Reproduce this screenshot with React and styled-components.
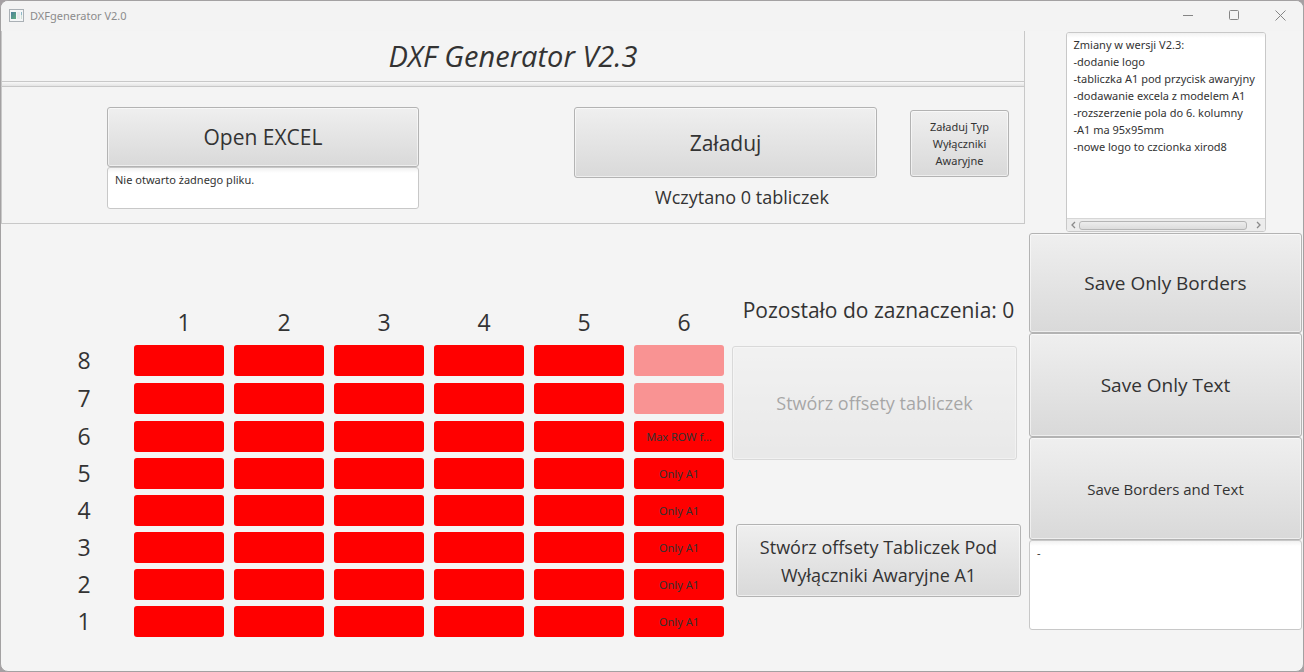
import React from "react";
import styled, { createGlobalStyle, css } from "styled-components";

const Global = createGlobalStyle`
  *, *::before, *::after { box-sizing: border-box; }
  body {
    margin: 0;
    background: #a5a0a3;
    color: #333;
    font-family: "Open Sans", "Noto Sans", sans-serif;
    font-size: 12px;
    line-height: 17px;
  }
  button, textarea { font-family: inherit; color: inherit; margin: 0; }
`;

const smallText = css`
  font-family: "Noto Sans", "Open Sans", sans-serif;
  font-size: 11px;
  line-height: 17px;
`;

const Window = styled.div`
  display: flex;
  flex-direction: column;
  min-height: 100vh;
  border: 1px solid #a3a1a2;
  border-radius: 8px;
  background: #f4f4f4;
  overflow: hidden;
`;

const TitleBar = styled.header`
  display: flex;
  align-items: center;
  height: 30px;
  padding: 0 0 2px 8px;
  gap: 6px;
  background: #f3f3f3;
  color: #8b8b8b;
`;

const WindowName = styled.span`
  flex: 1;
  ${smallText}
`;

const CaptionGroup = styled.div`
  display: flex;
`;

const CaptionButton = styled.button`
  display: flex;
  align-items: center;
  justify-content: center;
  width: 46px;
  height: 28px;
  padding: 0;
  border: 0;
  background: transparent;
  color: #858585;
`;

const Content = styled.div`
  display: flex;
  flex: 1;
`;

const Main = styled.main`
  flex: 1;
  min-width: 0;
`;

const SplitPane = styled.div`
  border: 1px solid #c8c8c8;
  border-top: 0;
`;

const Heading = styled.h1`
  margin: 0;
  height: 50px;
  font-size: 29px;
  font-style: italic;
  font-weight: 400;
  line-height: 50px;
  text-align: center;
`;

const Divider = styled.div`
  height: 6px;
  border: 1px solid #c8c8c8;
  border-width: 1px 0;
  background: linear-gradient(#f8f8f8, #e4e4e4);
`;

const LoadPanel = styled.section`
  display: flex;
  justify-content: space-between;
  align-items: flex-start;
  height: 136px;
  padding: 20px 15px 0 105px;
`;

const FileColumn = styled.div`
  display: flex;
  flex-direction: column;
  width: 312px;
`;

const LoadGroup = styled.div`
  display: flex;
`;

const LoadColumn = styled.div`
  width: 336px;
`;

const sizes = {
  small: smallText,
  medium: css`font-size: 15px; line-height: 20px;`,
  large: css`font-size: 18px; line-height: 28px;`,
  wide: css`font-size: 19px; line-height: 28px;`,
  huge: css`font-size: 21px; line-height: 30px;`,
};

const Button = styled.button`
  display: block;
  width: ${(p) => p.$width || "100%"};
  height: ${(p) => p.$height};
  padding: 0 12px;
  border: 1px solid #b3b3b3;
  border-radius: 3px;
  background: linear-gradient(#efefef, #d9d9d9);
  box-shadow: inset 0 0 0 1px rgba(255, 255, 255, 0.55);
  white-space: pre-line;
  ${(p) => sizes[p.$size]}
  &:disabled {
    color: #333;
    opacity: 0.4;
  }
`;

const SideLoad = styled.div`
  padding-top: 3px;
`;

const LoadStatus = styled.p`
  margin: 5px 0 0;
  font-size: 18px;
  line-height: 28px;
  text-align: center;
`;

const TextBox = styled.textarea`
  display: block;
  width: 100%;
  height: ${(p) => p.$height};
  padding: 3px 7px;
  border: 1px solid #c8c8c8;
  border-radius: 3px;
  background: linear-gradient(#f1f1f1, #fff 5px);
  ${smallText}
  outline: 0;
  overflow: hidden;
  resize: none;
`;

const Workspace = styled.section`
  display: flex;
  justify-content: space-between;
  padding: 72px 4px 0 33px;
`;

const Board = styled.div`
  display: grid;
  grid-template-columns: repeat(7, 100px);
  grid-template-rows: 43px repeat(2, 32px) repeat(6, 31px);
  row-gap: 6px;
`;

const AxisLabel = styled.span`
  font-size: 23px;
  line-height: ${(p) => (p.$column ? "52px" : "30px")};
  text-align: center;
`;

const Cell = styled.button`
  width: 90px;
  height: 31px;
  padding: 0;
  border: 0;
  border-radius: 3px;
  background: ${(p) => (p.disabled ? "#f99393" : "#f00")};
  ${smallText}
`;

const OffsetColumn = styled.div`
  display: flex;
  flex-direction: column;
  flex-shrink: 0;
  width: 289px;
  margin-left: -2px;
`;

const Remaining = styled.p`
  margin: 0 0 22px;
  padding-left: 4px;
  font-size: 21px;
  line-height: 28px;
  text-align: center;
  white-space: nowrap;
`;

const SecondAction = styled.div`
  align-self: flex-end;
  margin-top: 64px;
`;

const SaveColumn = styled.aside`
  width: 278px;
  padding: 1px 1px 0 4px;
`;

const Changelog = styled.div`
  display: flex;
  flex-direction: column;
  width: 200px;
  height: 200px;
  margin: 0 auto 1px;
  border: 1px solid #c8c8c8;
  border-radius: 3px;
  background: #fff;
  overflow: hidden;
`;

const ChangelogText = styled.textarea`
  flex: 1;
  width: 100%;
  padding: 3px 0 0 7px;
  border: 0;
  background: linear-gradient(#f1f1f1, #fff 5px);
  ${smallText}
  outline: 0;
  overflow: hidden;
  resize: none;
  white-space: pre;
`;

const ScrollBar = styled.div`
  display: flex;
  align-items: center;
  height: 13px;
  border-top: 1px solid #d6d6d6;
  background: #ececec;
`;

const ScrollArrow = styled.button`
  display: flex;
  align-items: center;
  justify-content: center;
  width: 12px;
  height: 12px;
  padding: 0;
  border: 0;
  background: transparent;
  color: #8a8a8a;
`;

const ScrollTrack = styled.div`
  flex: 1;
  padding-right: 6px;
`;

const ScrollThumb = styled.div`
  height: 9px;
  border: 1px solid #b5b5b5;
  border-radius: 3px;
  background: linear-gradient(#ededed, #dcdcdc);
`;

const changes = `Zmiany w wersji V2.3:
-dodanie logo
-tabliczka A1 pod przycisk awaryjny
-dodawanie excela z modelem A1
-rozszerzenie pola do 6. kolumny
-A1 ma 95x95mm
-nowe logo to czcionka xirod8`;

const columns = [1, 2, 3, 4, 5, 6];
const rows = [8, 7, 6, 5, 4, 3, 2, 1];

function cellText(row, column) {
  if (column !== 6 || row > 6) return "";
  return row === 6 ? "Max ROW f..." : "Only A1";
}

function AppIcon() {
  return (
    <svg width="15" height="13" viewBox="0 0 15 13" aria-hidden="true">
      <defs>
        <linearGradient id="screen" x1="0" y1="0" x2="1" y2="1">
          <stop offset="0" stopColor="#4b7f9c" />
          <stop offset="1" stopColor="#5fae80" />
        </linearGradient>
      </defs>
      <rect x="0.5" y="0.5" width="14" height="12" fill="#f4f6f7" stroke="#aab0b5" />
      <rect x="2" y="3" width="5" height="7" fill="url(#screen)" />
      <rect x="8" y="3" width="3" height="7" fill="#e6eaec" />
      <rect x="12" y="3" width="1" height="3" fill="#8fb8c8" />
      <rect x="12" y="6" width="1" height="4" fill="#cfe0d6" />
    </svg>
  );
}

function Arrow({ d }) {
  return (
    <svg width="6" height="8" viewBox="0 0 6 8" fill="none" stroke="currentColor" strokeWidth="1.3" aria-hidden="true">
      <path d={d} />
    </svg>
  );
}

function Captions() {
  const stroke = { fill: "none", stroke: "currentColor", strokeWidth: 1, "aria-hidden": true };
  return (
    <CaptionGroup>
      <CaptionButton aria-label="Minimalizuj">
        <svg width="11" height="11" viewBox="0 0 11 11" {...stroke}><path d="M0 5.500h10" /></svg>
      </CaptionButton>
      <CaptionButton aria-label="Maksymalizuj">
        <svg width="11" height="11" viewBox="0 0 11 11" {...stroke}><rect x="0.5" y="0.5" width="9" height="9" rx="1" /></svg>
      </CaptionButton>
      <CaptionButton aria-label="Zamknij">
        <svg width="11" height="11" viewBox="0 0 11 11" {...stroke}><path d="M.5 .5l10 10M10.500 .5l-10 10" /></svg>
      </CaptionButton>
    </CaptionGroup>
  );
}

export default function App() {
  return (
    <>
      <Global />
      <Window>
        <TitleBar>
          <AppIcon />
          <WindowName>DXFgenerator V2.0</WindowName>
          <Captions />
        </TitleBar>
        <Content>
          <Main>
            <SplitPane>
              <Heading>DXF Generator V2.3</Heading>
              <Divider />
              <LoadPanel>
                <FileColumn>
                  <Button $size="huge" $height="60px">Open EXCEL</Button>
                  <TextBox $height="42px" readOnly aria-label="Plik" value="Nie otwarto żadnego pliku." />
                </FileColumn>
                <LoadGroup>
                  <LoadColumn>
                    <Button $size="huge" $width="303px" $height="71px">Załaduj</Button>
                    <LoadStatus>Wczytano 0 tabliczek</LoadStatus>
                  </LoadColumn>
                  <SideLoad>
                    <Button $size="small" $width="99px" $height="67px">
                      {"Załaduj Typ\nWyłączniki\nAwaryjne"}
                    </Button>
                  </SideLoad>
                </LoadGroup>
              </LoadPanel>
            </SplitPane>
            <Workspace>
              <Board>
                <span />
                {columns.map((c) => (
                  <AxisLabel key={c} $column>{c}</AxisLabel>
                ))}
                {rows.map((r) => (
                  <React.Fragment key={r}>
                    <AxisLabel>{r}</AxisLabel>
                    {columns.map((c) => (
                      <Cell key={c} disabled={c === 6 && r > 6} aria-label={cellText(r, c) ? undefined : `${r}-${c}`}>
                        {cellText(r, c)}
                      </Cell>
                    ))}
                  </React.Fragment>
                ))}
              </Board>
              <OffsetColumn>
                <Remaining>Pozostało do zaznaczenia: 0</Remaining>
                <Button $size="large" $width="285px" $height="114px" disabled>Stwórz offsety tabliczek</Button>
                <SecondAction>
                  <Button $size="large" $width="285px" $height="73px">
                    {"Stwórz offsety Tabliczek Pod\nWyłączniki Awaryjne A1"}
                  </Button>
                </SecondAction>
              </OffsetColumn>
            </Workspace>
          </Main>
          <SaveColumn>
            <Changelog>
              <ChangelogText readOnly aria-label="Zmiany" value={changes} />
              <ScrollBar>
                <ScrollArrow aria-label="W lewo"><Arrow d="M5 1 2 4l3 3" /></ScrollArrow>
                <ScrollTrack><ScrollThumb /></ScrollTrack>
                <ScrollArrow aria-label="W prawo"><Arrow d="M1 1l3 3-3 3" /></ScrollArrow>
              </ScrollBar>
            </Changelog>
            <Button $size="wide" $height="100px">Save Only Borders</Button>
            <Button $size="wide" $height="104px">Save Only Text</Button>
            <Button $size="medium" $height="103px">Save Borders and Text</Button>
            <TextBox $height="90px" readOnly aria-label="Wynik" value="-" />
          </SaveColumn>
        </Content>
      </Window>
    </>
  );
}
